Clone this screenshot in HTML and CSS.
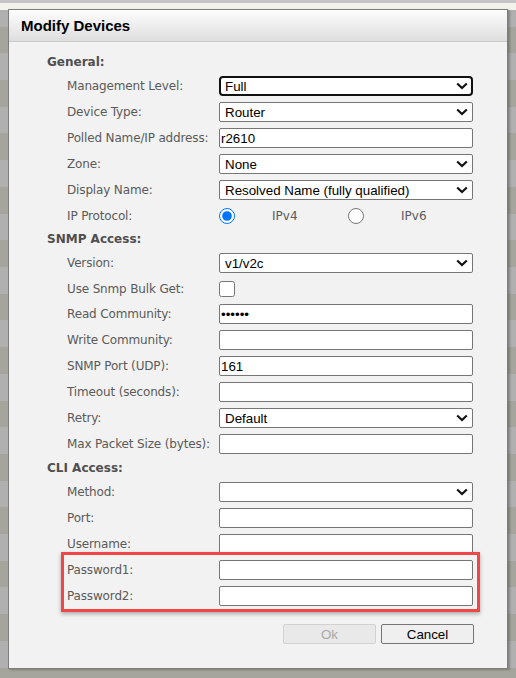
FILE: index.html
```html
<!DOCTYPE html>
<html lang="en">
<head>
  <meta charset="UTF-8">
  <title>Modify Devices</title>
  <link rel="stylesheet" href="styles.css">
</head>
<body>
  <div class="dialog">
    <div class="dialog-header">
      <h2>Modify Devices</h2>
    </div>

    <form class="dialog-body" onsubmit="event.preventDefault();">
      <div class="section-title">General:</div>

      <div class="field">
        <label for="mgmt-level">Management Level:</label>
        <span class="select-box">
          <select id="mgmt-level" class="is-focused">
            <option>Full</option>
            <option>Limited</option>
            <option>None</option>
          </select>
          <svg class="chevron" width="12" height="8" viewBox="0 0 12 8"><path d="M1.2 1.4 6 6.1 10.8 1.4"/></svg>
        </span>
      </div>

      <div class="field">
        <label for="device-type">Device Type:</label>
        <span class="select-box">
          <select id="device-type">
            <option>Router</option>
            <option>Switch</option>
            <option>Firewall</option>
          </select>
          <svg class="chevron" width="12" height="8" viewBox="0 0 12 8"><path d="M1.2 1.4 6 6.1 10.8 1.4"/></svg>
        </span>
      </div>

      <div class="field">
        <label for="polled-name">Polled Name/IP address:</label>
        <input type="text" id="polled-name" value="r2610">
      </div>

      <div class="field">
        <label for="zone">Zone:</label>
        <span class="select-box">
          <select id="zone">
            <option>None</option>
          </select>
          <svg class="chevron" width="12" height="8" viewBox="0 0 12 8"><path d="M1.2 1.4 6 6.1 10.8 1.4"/></svg>
        </span>
      </div>

      <div class="field">
        <label for="display-name">Display Name:</label>
        <span class="select-box">
          <select id="display-name">
            <option>Resolved Name (fully qualified)</option>
            <option>Resolved Name</option>
            <option>IP Address</option>
          </select>
          <svg class="chevron" width="12" height="8" viewBox="0 0 12 8"><path d="M1.2 1.4 6 6.1 10.8 1.4"/></svg>
        </span>
      </div>

      <div class="field field-radio">
        <label>IP Protocol:</label>
        <div class="radio-group">
          <input type="radio" name="ip-proto" id="ipv4" checked>
          <label for="ipv4">IPv4</label>
          <input type="radio" name="ip-proto" id="ipv6">
          <label for="ipv6">IPv6</label>
        </div>
      </div>

      <div class="section-title">SNMP Access:</div>

      <div class="field">
        <label for="snmp-version">Version:</label>
        <span class="select-box">
          <select id="snmp-version">
            <option>v1/v2c</option>
            <option>v3</option>
          </select>
          <svg class="chevron" width="12" height="8" viewBox="0 0 12 8"><path d="M1.2 1.4 6 6.1 10.8 1.4"/></svg>
        </span>
      </div>

      <div class="field field-check">
        <label for="bulk-get">Use Snmp Bulk Get:</label>
        <input type="checkbox" id="bulk-get">
      </div>

      <div class="field">
        <label for="read-community">Read Community:</label>
        <input type="password" id="read-community" value="public">
      </div>

      <div class="field">
        <label for="write-community">Write Community:</label>
        <input type="text" id="write-community">
      </div>

      <div class="field">
        <label for="snmp-port">SNMP Port (UDP):</label>
        <input type="text" id="snmp-port" value="161">
      </div>

      <div class="field">
        <label for="timeout">Timeout (seconds):</label>
        <input type="text" id="timeout">
      </div>

      <div class="field">
        <label for="retry">Retry:</label>
        <span class="select-box">
          <select id="retry">
            <option>Default</option>
            <option>1</option>
            <option>2</option>
            <option>3</option>
          </select>
          <svg class="chevron" width="12" height="8" viewBox="0 0 12 8"><path d="M1.2 1.4 6 6.1 10.8 1.4"/></svg>
        </span>
      </div>

      <div class="field">
        <label for="max-packet">Max Packet Size (bytes):</label>
        <input type="text" id="max-packet">
      </div>

      <div class="section-title">CLI Access:</div>

      <div class="field">
        <label for="cli-method">Method:</label>
        <span class="select-box">
          <select id="cli-method">
            <option></option>
            <option>SSH</option>
            <option>Telnet</option>
          </select>
          <svg class="chevron" width="12" height="8" viewBox="0 0 12 8"><path d="M1.2 1.4 6 6.1 10.8 1.4"/></svg>
        </span>
      </div>

      <div class="field">
        <label for="cli-port">Port:</label>
        <input type="text" id="cli-port">
      </div>

      <div class="field">
        <label for="cli-user">Username:</label>
        <input type="text" id="cli-user">
      </div>

      <div class="highlight">
        <div class="field">
          <label for="cli-pass1">Password1:</label>
          <input type="password" id="cli-pass1">
        </div>
        <div class="field">
          <label for="cli-pass2">Password2:</label>
          <input type="password" id="cli-pass2">
        </div>
      </div>

      <div class="dialog-buttons">
        <button type="submit" disabled>Ok</button>
        <button type="button">Cancel</button>
      </div>
    </form>
  </div>
</body>
</html>
```

FILE: styles.css
```css
body {
  margin: 0;
  padding: 9px 8px;
  font-family: "DejaVu Sans", Verdana, sans-serif;
  background:
    linear-gradient(#c4c4c4 0 3px, #f3f3ec 3px 10px, transparent 10px),
    repeating-linear-gradient(180deg, #b0b0b0 0 26.7px, #a5a59d 26.7px 53.4px);
}

.dialog {
  width: 500px;
  height: 660px;
  box-sizing: border-box;
  border: 1px solid #7d7d7d;
  background-color: #f2f2f2;
  box-shadow: 2px 1px 2px rgba(0, 0, 0, 0.25);
}

.dialog-header {
  height: 31px;
  display: flex;
  align-items: center;
  padding-left: 12px;
  border-bottom: 1px solid #c9c9c9;
  background: linear-gradient(#fdfdfd, #dedede);
}

.dialog-header h2 {
  margin: 0;
  font: bold 15px "Liberation Sans", Arial, sans-serif;
  color: #000;
}

.dialog-body {
  padding: 9px 33px 0 38px;
}

.section-title {
  height: 22px;
  line-height: 22px;
  font-size: 12px;
  font-weight: bold;
  color: #4f4f4f;
}

.field {
  height: 26px;
  display: flex;
  align-items: center;
  padding-left: 20px;
  font-size: 12px;
  color: #5a5a5a;
}

.field > label {
  width: 152px;
  flex: none;
  letter-spacing: -0.15px;
}

.field input[type="text"],
.field input[type="password"],
.field select {
  width: 254px;
  height: 20px;
  box-sizing: border-box;
  margin: 0;
  border: 1px solid #767676;
  border-radius: 2px;
  background-color: #fff;
  font: 13.33px "Liberation Sans", Arial, sans-serif;
  color: #000;
}

.field input[type="text"],
.field input[type="password"] {
  padding: 0 1px;
}

/* selects draw their own chevron, see .chevron */
.select-box {
  position: relative;
  display: flex;
}

.field select {
  appearance: none;
  padding: 0 20px 0 5px;
}

.field select.is-focused {
  border: 2px solid #101010;
  border-radius: 4px;
  padding-left: 4px;
}

.chevron {
  position: absolute;
  right: 5px;
  top: 6px;
  fill: none;
  stroke: #111;
  stroke-width: 2.1;
  pointer-events: none;
}

.field-radio {
  height: 25px;
}

.field-check {
  height: 25px;
}

.field input[type="checkbox"],
.field input[type="radio"] {
  width: 16px;
  height: 16px;
  margin: 0;
}

.radio-group {
  display: flex;
  align-items: center;
}

.radio-group label {
  width: 76px;
  padding-left: 37px;
  box-sizing: border-box;
  flex: none;
}

.radio-group label:first-of-type {
  width: 113px;
}

.highlight {
  position: relative;
}

.highlight::after {
  content: "";
  position: absolute;
  top: -5px;
  bottom: -3px;
  left: 14px;
  right: -6px;
  border: 3px solid #f04646;
  box-shadow: 0 2px 4px rgba(0, 0, 0, 0.3);
  pointer-events: none;
}

.dialog-buttons {
  display: flex;
  justify-content: flex-end;
  gap: 5px;
  margin-top: 15px;
}

.dialog-buttons button {
  width: 93px;
  height: 20px;
  padding: 0;
  border: 1px solid #767676;
  border-radius: 2px;
  background-color: #efefef;
  font: 13.33px "Liberation Sans", Arial, sans-serif;
  color: #000;
}

.dialog-buttons button:disabled {
  border-color: #d2d2d2;
  background-color: #e9e9e9;
  color: #a8a8a8;
}
```
